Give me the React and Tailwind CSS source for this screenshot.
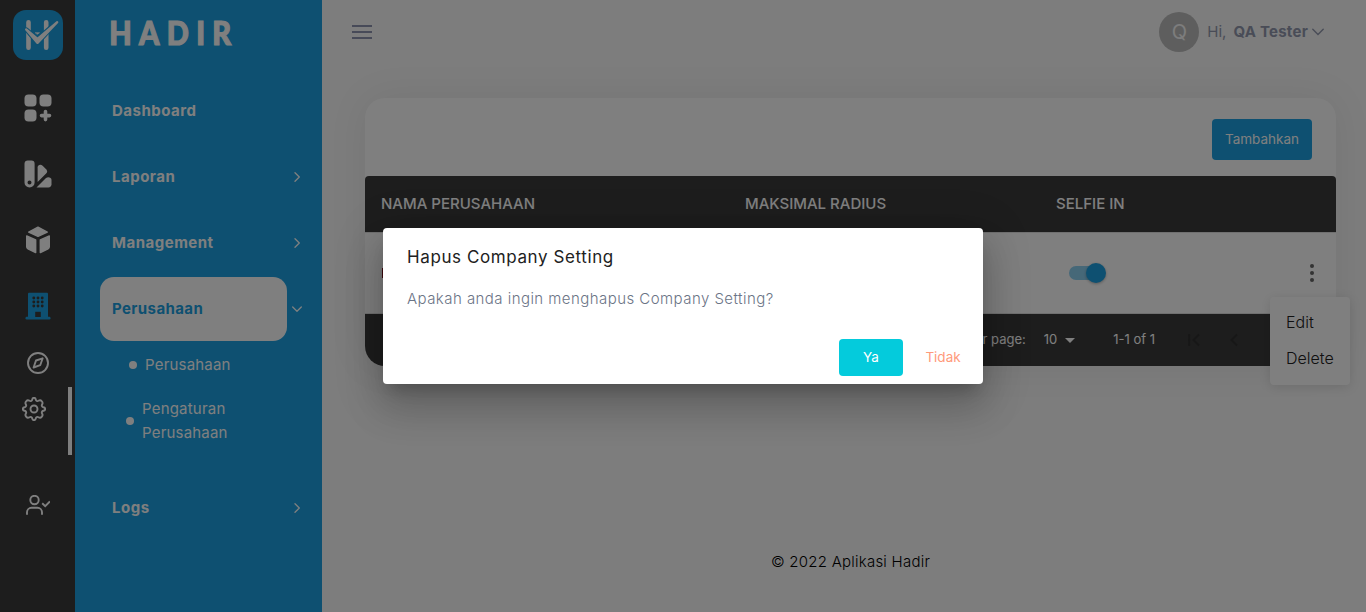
import React from "react";

function LogoMark() {
  return (
    <svg viewBox="0 0 50 50" className="size-[50px] shrink-0">
      <rect width="50" height="50" rx="13" fill="#1ca1e2" />
      <g strokeLinecap="round" strokeLinejoin="round">
        <path d="M15.500 12.200V37.800M33.200 12.200V37.800" fill="none" stroke="#fff" strokeWidth="4.600" />
        <path d="M13.200 19.500L24.500 29L44 12L24.500 32.900Z" fill="#1ca1e2" stroke="#1ca1e2" strokeWidth="4.400" />
        <path d="M13.200 19.500L24.500 28.800L44.200 12.200L24.500 32.900Z" fill="#fff" stroke="#fff" strokeWidth="2.300" />
        <path d="M22.500 22.700h4l-2 1.500z" fill="#fff" stroke="#fff" strokeWidth="0.600" />
      </g>
    </svg>
  );
}

function AppsIcon() {
  return (
    <svg viewBox="0 0 28 28" className="size-7" fill="#fff">
      <rect x="0.5" y="0.5" width="12" height="12" rx="4" />
      <rect x="15.5" y="0.5" width="12" height="12" rx="4" />
      <rect x="0.5" y="15.5" width="12" height="12" rx="4" />
      <path d="M21.5 17.6v8M17.5 21.6h8" stroke="#fff" strokeWidth="3.6" strokeLinecap="round" />
    </svg>
  );
}

function SwatchIcon() {
  return (
    <svg viewBox="0 0 28 28" className="size-7" fill="#fff">
      <path fillRule="evenodd" d="M4 .5h3.4A3.2 3.2 0 0 1 10.6 3.700V22.400a5 5 0 0 1-10.100 0V3.700A3.400 3.400 0 0 1 4 .5ZM5.500 20.500a2 2 0 1 0 0 4 2 2 0 0 0 0-4Z" />
      <path d="M13.600 7.500c0-2.800 3.200-3.500 5-1.800l3.500 3.500c1.500 1.500 1.400 3-.2 4.600L13.600 22Z" />
      <path d="M12.500 27.500L22 18c2.300-1.600 5.500-.5 5.500 2v4.300c0 2-1.200 3.200-3.200 3.200Z" />
    </svg>
  );
}

function CubeIcon() {
  return (
    <svg viewBox="0 0 26 28" className="h-7 w-[26px]" fill="#fff" stroke="#fff" strokeLinejoin="round" strokeWidth="1.400">
      <path d="M13 1.200L22.300 6 13 10.400 3.700 6Z" />
      <path d="M1.700 9.900L10.700 13.900V26.600L3 22.900Q1.700 22.200 1.700 20.800Z" />
      <path d="M24.300 9.900L15.300 13.900V26.600L23 22.900Q24.300 22.200 24.300 20.800Z" />
    </svg>
  );
}

function BuildingIcon() {
  return (
    <svg viewBox="0 0 26 28" className="h-7 w-[26px]">
      <path d="M4 .7h18a1 1 0 0 1 1 1V25H3V1.700A1 1 0 0 1 4 .7Z" fill="#1ca1e2" />
      <rect x="0.500" y="24.700" width="25" height="2.800" rx="1.200" fill="#1ca1e2" />
      <rect x="10.200" y="19.800" width="5.600" height="5.200" fill="#3b3b3b" />
      <g fill="#3b3b3b">
        {[6, 10, 14].map((y) => [8.800, 13, 17.200].map((x) => <circle key={`${x}-${y}`} cx={x} cy={y} r="1.450" />))}
      </g>
    </svg>
  );
}

function CompassIcon() {
  return (
    <svg viewBox="0 0 22 22" className="size-[22px]" fill="none" stroke="#fff" strokeWidth="1.900" strokeLinejoin="round">
      <circle cx="11" cy="11" r="10" />
      <path d="M15.700 6.300L9 8.500 6.600 15.500 13.200 13.200Z" />
    </svg>
  );
}

function GearIcon() {
  return (
    <svg viewBox="0 0 24 24" className="size-6" fill="none" stroke="#fff" strokeWidth="1.900" strokeLinejoin="round">
      <circle cx="12" cy="12" r="3.500" />
      <path d="M12 .8C13.300 .8 13.600 1.400 13.800 2.600C14 4 15.300 4.500 16.500 3.800C17.700 3 18.700 3 19.700 4.100C20.800 5.200 20.900 6.100 20.100 7.400C19.400 8.600 20 9.900 21.300 10.200C22.600 10.400 23.200 11 23.200 12C23.200 13 22.600 13.600 21.300 13.800C20 14.100 19.400 15.400 20.100 16.600C20.900 17.900 20.800 18.800 19.700 19.900C18.700 21 17.700 21 16.500 20.200C15.300 19.500 14 20 13.800 21.400C13.600 22.600 13.300 23.200 12 23.200C10.700 23.200 10.400 22.600 10.200 21.400C10 20 8.700 19.500 7.500 20.200C6.300 21 5.300 21 4.300 19.900C3.200 18.800 3.100 17.900 3.900 16.600C4.600 15.400 4 14.100 2.700 13.800C1.400 13.600 .8 13 .8 12C.8 11 1.400 10.400 2.700 10.200C4 9.900 4.600 8.600 3.900 7.400C3.100 6.100 3.200 5.200 4.300 4.100C5.300 3 6.300 3 7.500 3.800C8.700 4.500 10 4 10.200 2.600C10.400 1.400 10.700 .8 12 .8Z" />
    </svg>
  );
}

function UserCheckIcon() {
  return (
    <svg viewBox="0 0 24 20" className="h-5 w-6" fill="none" stroke="#fff" strokeWidth="1.900">
      <circle cx="8.500" cy="5" r="4.200" />
      <path d="M1 19.800v-2.600a4.500 4.500 0 0 1 4.500-4.400h6a4.500 4.500 0 0 1 4.500 4.400v2.600M16.200 8.300l3 2.800 4.700-4.600" />
    </svg>
  );
}

function Chevron({ down = false }) {
  return (
    <svg viewBox="0 0 10 10" className="size-[10px]" fill="none" stroke="currentColor" strokeWidth="1.300" strokeLinecap="round" strokeLinejoin="round">
      <path d={down ? "M.7 3L5 7.300 9.300 3" : "M3 .7L7.300 5 3 9.300"} />
    </svg>
  );
}

function NavItem({ label, arrow = true }) {
  return (
    <div className="flex h-16 items-center justify-between pr-5 pl-[37px] text-[15px] font-bold tracking-[0.5px] text-white">
      <span>{label}</span>
      {arrow && <Chevron />}
    </div>
  );
}

function Rail() {
  return (
    <aside className="flex w-[75px] shrink-0 flex-col bg-[#3b3b3b] pt-[10px]">
      <div className="flex justify-center pl-px"><LogoMark /></div>
      <div className="mt-[14.5px] flex h-[66px] items-center justify-center"><AppsIcon /></div>
      <div className="flex h-[66px] items-center justify-center"><SwatchIcon /></div>
      <div className="flex h-[66px] items-center justify-center pl-px"><CubeIcon /></div>
      <div className="flex h-[66px] items-center justify-center"><BuildingIcon /></div>
      <div className="flex h-[48.5px] items-center justify-center pt-px pl-px"><CompassIcon /></div>
      <div className="flex h-[68px] justify-between pr-[3px] pl-[22px]">
        <div className="pt-[10px]"><GearIcon /></div>
        <div className="w-1 bg-white" />
      </div>
      <div className="mt-10 flex justify-center"><UserCheckIcon /></div>
    </aside>
  );
}

function Sidebar() {
  return (
    <nav className="flex w-[247px] shrink-0 flex-col bg-[#1ca1e2] text-white">
      <div className="h-[79px] origin-left scale-x-[0.88] pt-[14px] pl-[39px] font-['Lato'] text-[33px] leading-[36px] font-black tracking-[8.3px] [-webkit-text-stroke:1.2px_#fff] [paint-order:stroke] [stroke-linejoin:round]">HADIR</div>
      <div className="flex flex-col gap-[2px]">
        <NavItem label="Dashboard" arrow={false} />
        <NavItem label="Laporan" />
        <NavItem label="Management" />
        <div className="flex h-16 items-center justify-between pr-5 pl-[25px]">
          <div className="flex h-16 w-[187px] items-center rounded-[14px] bg-white pl-3 text-[15px] font-bold tracking-[0.4px] text-[#1ca1e2]">Perusahaan</div>
          <Chevron down />
        </div>
      </div>
      <div className="flex h-12 items-center gap-2 pl-[54px] text-[15px] tracking-[0.2px]">
        <span className="size-2 rounded-full bg-white" />
        <span>Perusahaan</span>
      </div>
      <div className="mt-2 flex h-12 items-center gap-2 pl-[51px] text-[15px] leading-6 tracking-[0.2px]">
        <span className="size-2 rounded-full bg-white" />
        <span>Pengaturan<br />Perusahaan</span>
      </div>
      <div className="mt-[31px]"><NavItem label="Logs" /></div>
    </nav>
  );
}

function Header() {
  return (
    <header className="flex h-16 items-center justify-between pr-[42px] pl-[30px] text-[#9299ae]">
      <div className="flex w-5 flex-col gap-1">
        <span className="h-[2px] bg-[#8f95b0]" />
        <span className="h-[2px] bg-[#8f95b0]" />
        <span className="h-[2px] bg-[#8f95b0]" />
      </div>
      <div className="flex items-center text-[15px]">
        <div className="flex size-10 items-center justify-center rounded-full bg-[#bdbdbd] text-[20px] text-[#fafafa]">Q</div>
        <span className="ml-2">Hi,</span>
        <span className="ml-[7px] font-bold tracking-[0.25px]">QA Tester</span>
        <svg viewBox="0 0 12 8" className="ml-1 h-2 w-3" fill="none" stroke="currentColor" strokeWidth="1.400" strokeLinecap="round"><path d="M.8 1.300L6 6.500 11.200 1.300" /></svg>
      </div>
    </header>
  );
}

function SettingsCard() {
  return (
    <section className="mt-[34px] mr-[30px] ml-[43px] flex h-[268px] flex-col overflow-hidden rounded-[20px] bg-white shadow-[0_0_40px_rgba(0,30,20,0.07)]">
      <div className="flex h-[78px] shrink-0 items-start justify-end pt-[21px] pr-6">
        <button className="h-[41px] w-[100px] rounded-[4px] bg-[#1ca1e2] text-[13.5px] text-white">Tambahkan</button>
      </div>
      <div className="grid h-14 shrink-0 grid-cols-[364px_311px_1fr] items-center rounded-t-[4px] bg-[#3b3b3b] px-4 text-[15px] font-medium text-white">
        <span>NAMA PERUSAHAAN</span>
        <span>MAKSIMAL RADIUS</span>
        <span>SELFIE IN</span>
      </div>
      <div className="grid h-[82px] shrink-0 grid-cols-[364px_311px_1fr] items-center border-y border-[#e0e0e0] px-4">
        <span className="ml-px h-[10px] w-[2px] bg-[#7a1018]" />
        <span />
        <div className="flex items-center justify-between pl-[13px]">
          <div className="flex h-[14px] w-[34px] items-center justify-end rounded-full bg-[#8dd0f1]">
            <span className="-mr-[3px] size-5 shrink-0 rounded-full bg-[#1ca1e2] shadow-[0_1px_3px_rgba(0,0,0,0.3)]" />
          </div>
          <div className="flex flex-col gap-[3px] pr-[6px]">
            <span className="size-1 rounded-full bg-[#666]" />
            <span className="size-1 rounded-full bg-[#666]" />
            <span className="size-1 rounded-full bg-[#666]" />
          </div>
        </div>
      </div>
      <div className="flex h-[52px] shrink-0 items-center justify-end bg-[#3b3b3b] pr-[98px] text-[13px] text-white">
        <span>Rows per page:</span>
        <span className="ml-[18px]">10</span>
        <span className="ml-2 border-x-[5px] border-t-[5px] border-x-transparent border-t-white" />
        <span className="ml-[38px]">1-1 of 1</span>
        <svg viewBox="0 0 12 14" className="ml-[33px] h-[14px] w-3" fill="none" stroke="#2e2e2e" strokeWidth="2"><path d="M1.200 1v12M11 1.500L5.500 7 11 12.500" /></svg>
        <svg viewBox="0 0 8 14" className="ml-[30px] h-[14px] w-2" fill="none" stroke="#2e2e2e" strokeWidth="2"><path d="M7 1.500L1.500 7 7 12.500" /></svg>
      </div>
    </section>
  );
}

function RowMenu() {
  return (
    <div className="absolute top-[297px] left-[1270px] flex h-[88px] w-20 flex-col rounded-[4px] bg-white py-[7px] pl-4 text-base font-light text-[#212121] shadow-[0_2px_12px_rgba(0,0,0,0.12)]">
      <span className="flex h-9 items-center">Edit</span>
      <span className="flex h-9 items-center">Delete</span>
    </div>
  );
}

function ConfirmDialog() {
  return (
    <div className="absolute inset-0 flex items-center justify-center bg-black/50">
      <div className="flex h-[156px] w-[600px] flex-col rounded-[4px] bg-white px-6 pt-4 pb-2 shadow-[0_11px_15px_-7px_rgba(0,0,0,0.2),0_24px_38px_3px_rgba(0,0,0,0.14),0_9px_46px_8px_rgba(0,0,0,0.12)]">
        <h2 className="text-[17px] leading-[27px] tracking-[0.6px] text-[#212121]">Hapus Company Setting</h2>
        <p className="mt-4 text-[15px] leading-6 font-light tracking-[0.45px] text-[#6b7486]">Apakah anda ingin menghapus Company Setting?</p>
        <div className="mt-auto -mr-4 flex justify-end gap-2 text-[13.5px]">
          <button className="h-[37px] w-16 rounded-[4px] bg-[#04cbdc] text-white">Ya</button>
          <button className="h-[37px] w-16 text-[#ff9a7b]">Tidak</button>
        </div>
      </div>
    </div>
  );
}

export default function App() {
  return (
    <div className="relative flex h-[612px] w-[1366px] overflow-hidden bg-[#fafafa] font-['Inter',sans-serif]">
      <Rail />
      <Sidebar />
      <main className="flex min-w-0 flex-1 flex-col">
        <Header />
        <SettingsCard />
        <footer className="mt-auto mr-[30px] ml-[43px] pb-[38px] text-center text-[15px] leading-6 font-light tracking-[0.24px] text-black">© 2022 Aplikasi Hadir</footer>
      </main>
      <RowMenu />
      <ConfirmDialog />
    </div>
  );
}
